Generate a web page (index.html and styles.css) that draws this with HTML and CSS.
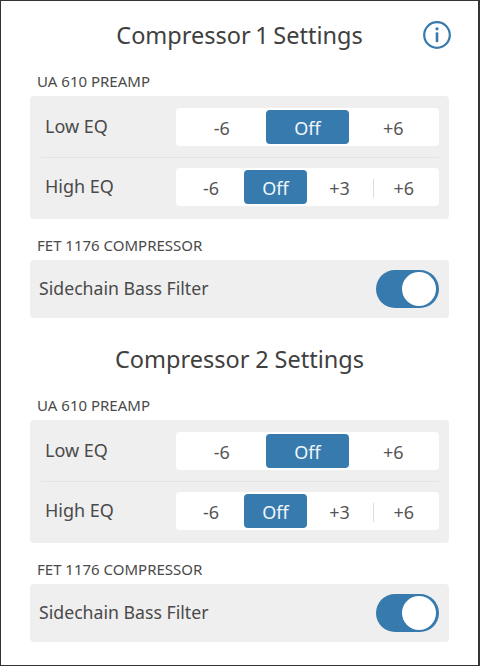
FILE: index.html
```html
<!DOCTYPE html>
<html lang="en">
<head>
  <meta charset="UTF-8">
  <title>Compressor Settings</title>
  <link rel="stylesheet" href="styles.css">
</head>
<body>
  <div class="screen">
    <!-- Compressor 1 -->
    <div class="title-row">
      <h1>Compressor 1 Settings</h1>
      <svg class="info" width="30" height="30" viewBox="0 0 30 30">
        <circle cx="15" cy="15" r="12.8" fill="none" stroke="#377aad" stroke-width="2.2"/>
        <circle cx="15" cy="8.8" r="1.6" fill="#377aad"/>
        <rect x="13.7" y="12.3" width="2.6" height="10" rx="1" fill="#377aad"/>
      </svg>
    </div>
    <div class="group-label">UA 610 PREAMP</div>
    <div class="panel">
      <div class="eq-row">
        <span class="eq-name">Low EQ</span>
        <div class="segments">
          <span class="opt">-6</span>
          <span class="opt selected">Off</span>
          <span class="opt">+6</span>
        </div>
      </div>
      <div class="eq-row second">
        <span class="eq-name">High EQ</span>
        <div class="segments">
          <span class="opt">-6</span>
          <span class="opt selected">Off</span>
          <span class="opt">+3</span>
          <span class="opt sep">+6</span>
        </div>
      </div>
    </div>
    <div class="group-label lower">FET 1176 COMPRESSOR</div>
    <div class="panel switch-row">
      <span class="switch-name">Sidechain Bass Filter</span>
      <div class="toggle"><span class="knob"></span></div>
    </div>

    <!-- Compressor 2 -->
    <div class="title-row next">
      <h1>Compressor 2 Settings</h1>
    </div>
    <div class="group-label">UA 610 PREAMP</div>
    <div class="panel">
      <div class="eq-row">
        <span class="eq-name">Low EQ</span>
        <div class="segments">
          <span class="opt">-6</span>
          <span class="opt selected">Off</span>
          <span class="opt">+6</span>
        </div>
      </div>
      <div class="eq-row second">
        <span class="eq-name">High EQ</span>
        <div class="segments">
          <span class="opt">-6</span>
          <span class="opt selected">Off</span>
          <span class="opt">+3</span>
          <span class="opt sep">+6</span>
        </div>
      </div>
    </div>
    <div class="group-label lower">FET 1176 COMPRESSOR</div>
    <div class="panel switch-row">
      <span class="switch-name">Sidechain Bass Filter</span>
      <div class="toggle"><span class="knob"></span></div>
    </div>
  </div>
</body>
</html>
```

FILE: styles.css
```css
* {
  box-sizing: border-box;
  margin: 0;
  padding: 0;
}

body {
  font-family: "Noto Sans", "Open Sans", sans-serif;
  background: #fff;
  color: #4a4a4a;
}

.screen {
  width: 480px;
  height: 666px;
  border: 1px solid #333;
  border-right-width: 2px;
  padding: 0 29px;
  overflow: hidden;
}

/* Titles */
.title-row {
  display: flex;
  justify-content: center;
  align-items: center;
  position: relative;
  height: 50px;
  margin-top: 9px;
  margin-bottom: 13px;
}

.title-row.next {
  margin-top: 16px;
}

h1 {
  font-size: 23.5px;
  font-weight: 400;
  color: #404040;
  font-variant-numeric: proportional-nums;
}

.info {
  position: absolute;
  right: -3px;
  top: 10px;
}

.group-label {
  font-size: 15px;
  line-height: 16px;
  margin-left: 7px;
  margin-bottom: 7px;
}

.group-label.lower {
  margin-top: 18px;
}

/* Grey panels */
.panel {
  background: #efefef;
  border-radius: 4px;
  padding: 12px 10px 13px 11px;
}

.eq-row {
  display: flex;
  align-items: center;
  justify-content: space-between;
}

.eq-row.second {
  border-top: 1px solid #e4e4e4;
  margin-top: 11px;
  padding-top: 10px;
}

.eq-name {
  font-size: 18px;
  padding-left: 4px;
  padding-bottom: 2px;
}

.segments {
  display: flex;
  gap: 2px;
  width: 263px;
  height: 38px;
  padding: 2px 4px;
  background: #fff;
  border-radius: 4px;
}

.opt {
  flex: 1;
  display: flex;
  align-items: center;
  justify-content: center;
  position: relative;
  font-size: 18px;
  padding-top: 1px;
  border-radius: 4px;
  color: #555;
}

.opt.selected {
  background: #377aad;
  color: #f2f6fa;
}

.opt.sep::before {
  content: "";
  position: absolute;
  left: 0;
  top: 9px;
  height: 19px;
  width: 1px;
  background: #ddd;
}

/* Switch rows */
.switch-row {
  display: flex;
  align-items: center;
  justify-content: space-between;
  height: 58px;
  padding: 0 10px 0 9px;
}

.switch-name {
  font-size: 17.7px;
  padding-bottom: 3px;
}

.toggle {
  display: flex;
  justify-content: flex-end;
  align-items: center;
  width: 63px;
  height: 38px;
  padding-right: 3px;
  background: #377aad;
  border-radius: 19px;
}

.knob {
  width: 34px;
  height: 34px;
  background: #fff;
  border-radius: 50%;
}
```
